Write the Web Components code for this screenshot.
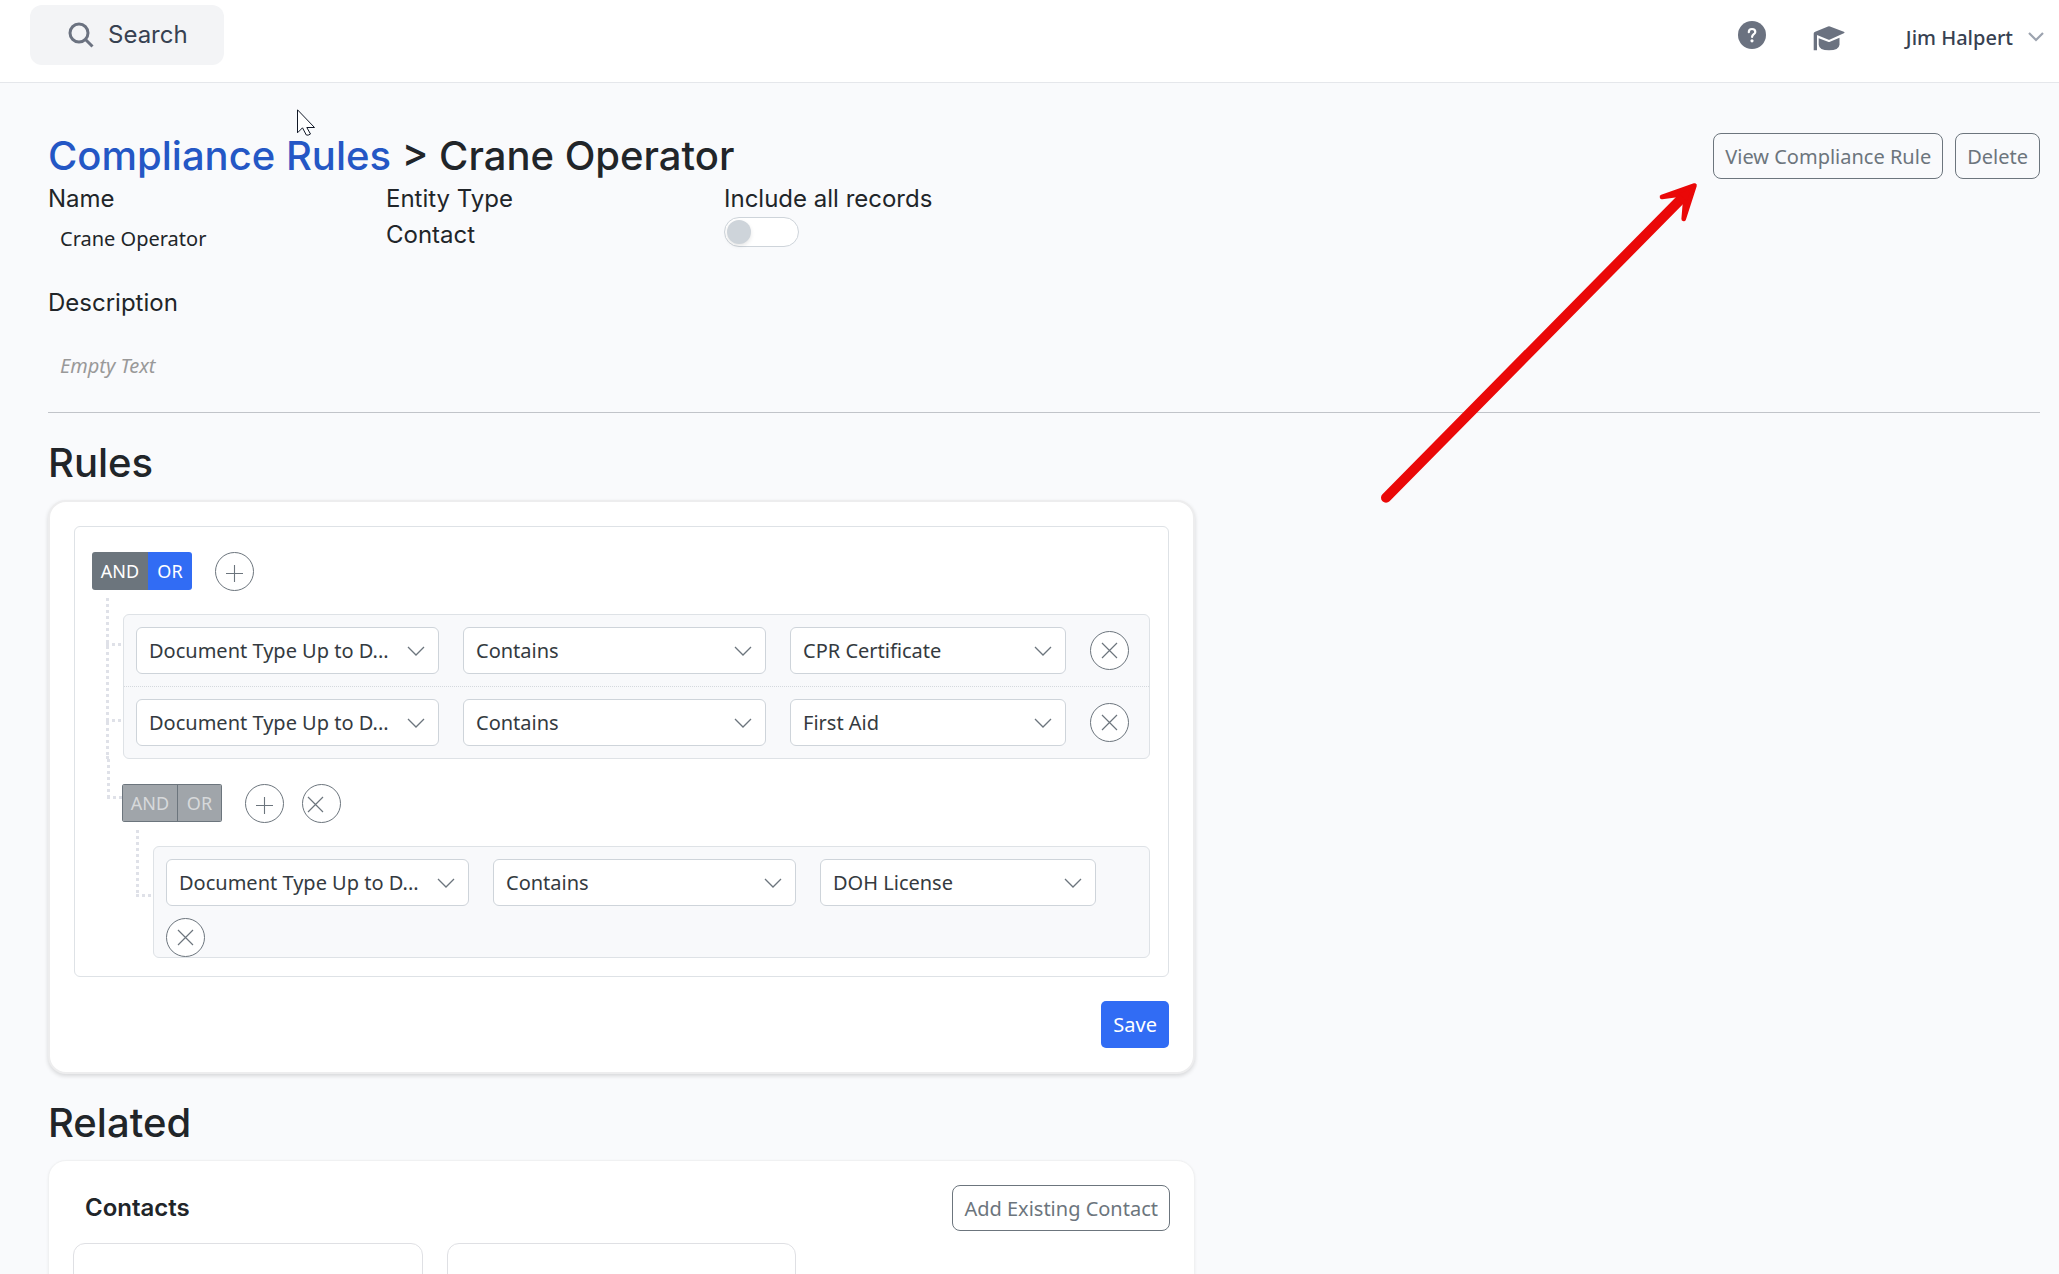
<!DOCTYPE html>
<html lang="en">
<head>
  <meta charset="utf-8">
  <title>Crane Operator - Compliance Rules</title>
  <meta name="viewport" content="width=device-width, initial-scale=1">
  <style>
    :root {
      --ui: "Noto Sans", "Open Sans", sans-serif;
      --heading: Inter, "Liberation Sans", sans-serif;
      --ink: #212529;
      --grey: #6c757d;
      --blue: #316cf4;
      --line: #dee2e6;
    }
    body {
      margin: 0;
      height: 100vh;
      display: flex;
      flex-direction: column;
      overflow: hidden;
      background: #f9fafc;
      color: var(--ink);
      font: 20px/30px var(--ui);
    }
  </style>
</head>
<body>
  <app-header user="Jim Halpert"></app-header>

  <page-body>
    <page-title parent="Compliance Rules" current="Crane Operator">
      <outline-button>View Compliance Rule</outline-button>
      <outline-button>Delete</outline-button>
    </page-title>

    <field-grid>
      <text-field label="Name" inset>Crane Operator</text-field>
      <text-field label="Entity Type">Contact</text-field>
      <toggle-field label="Include all records"></toggle-field>
    </field-grid>
    <text-field label="Description" inset empty>Empty Text</text-field>

    <page-section heading="Rules" ruled>
      <content-card raised>
        <rule-builder>
          <rule-group active="OR">
            <rule-list>
              <rule-row field="Document Type Up to D..." operator="Contains" value="CPR Certificate"></rule-row>
              <rule-row field="Document Type Up to D..." operator="Contains" value="First Aid"></rule-row>
            </rule-list>
            <rule-group slot="nested" locked>
              <rule-list>
                <rule-row tight field="Document Type Up to D..." operator="Contains" value="DOH License"></rule-row>
              </rule-list>
            </rule-group>
          </rule-group>
        </rule-builder>
        <save-bar></save-bar>
      </content-card>
    </page-section>

    <page-section heading="Related">
      <content-card>
        <related-list heading="Contacts">
          <outline-button slot="action">Add Existing Contact</outline-button>
        </related-list>
      </content-card>
    </page-section>

    <pointer-arrow></pointer-arrow>
    <mouse-pointer></mouse-pointer>
  </page-body>

  <script>
    const CROSS = '<svg width="17" height="17" viewBox="0 0 17 17"><path d="M1 1l15 15M16 1L1 16" fill="none" stroke="#6c757d" stroke-width="1.2"/></svg>';
    const PLUS = '<svg width="17" height="17" viewBox="0 0 17 17"><path d="M8.5 0v17M0 8.5h17" fill="none" stroke="#6c757d" stroke-width="1.1"/></svg>';

    class AppHeader extends HTMLElement {
      connectedCallback() {
        this.attachShadow({ mode: 'open' });
        this.shadowRoot.innerHTML = `
          <style>
            :host {
              display: flex;
              flex: none;
              align-items: flex-start;
              justify-content: space-between;
              box-sizing: border-box;
              height: 83px;
              padding: 5px 14px 0 30px;
              background: #fff;
              border-bottom: 1px solid #e5e7eb;
            }
            button, a {
              display: flex;
              align-items: center;
              border: 0;
              background: none;
              padding: 0;
              color: #374151;
            }
            .search {
              gap: 14px;
              height: 60px;
              padding: 0 36px 0 38px;
              border-radius: 12px;
              background: #f3f4f6;
              font: 24px/36px var(--heading);
            }
            .tools {
              display: flex;
              align-items: center;
              height: 60px;
            }
            .help { margin-right: 47px; }
            .learn { margin-right: 61px; padding-top: 6px; }
            .user {
              gap: 14px;
              font: 500 20px/30px var(--ui);
              padding-top: 6px;
            }
            .user svg { margin-bottom: 4px; }
          </style>
          <button class="search">
            <svg width="26" height="26" viewBox="0 0 26 26" fill="none" stroke="#6b7280" stroke-width="3"><circle cx="11" cy="11" r="9"/><path d="M17.5 17.5l7 7"/></svg>
            Search
          </button>
          <div class="tools">
            <a class="help" href="#help" aria-label="Help">
              <svg width="28" height="28" viewBox="0 0 28 28"><circle cx="14" cy="14" r="14" fill="#6b7280"/><path d="M10.8 11.2c0-2 1.3-3.2 3.2-3.2s3.3 1.2 3.3 2.9c0 2.300-3.2 2.4-3.2 5" fill="none" stroke="#fff" stroke-width="2.2" stroke-linecap="round"/><circle cx="14" cy="19.8" r="1.6" fill="#fff"/></svg>
            </a>
            <a class="learn" href="#learn" aria-label="Training">
              <svg width="32" height="25" viewBox="0 0 32 25" fill="#6b7280"><path d="M15 .4q1-.5 2 0l13.8 5.4q1.4.7 0 1.5L17 13.6q-1 .4-2 0L4 9v15.200H.7V7.500q0-1 .9-1.600z"/><path d="M5.700 12.200L15 15.800q1 .4 2 0l9.500-4v6.900q-.6 5.500-10.500 5.500T5.700 18.700z"/></svg>
            </a>
            <button class="user">
              ${this.getAttribute('user')}
              <svg width="18" height="11" viewBox="0 0 18 11"><path d="M2 2l7 7 7-7" fill="none" stroke="#9ca3af" stroke-width="2.2"/></svg>
            </button>
          </div>
        `;
      }
    }
    customElements.define('app-header', AppHeader);

    class PageBody extends HTMLElement {
      connectedCallback() {
        this.attachShadow({ mode: 'open' });
        this.shadowRoot.innerHTML = `
          <style>
            :host {
              display: block;
              flex: 1;
              position: relative;
              padding: 48px 19px 0 48px;
              overflow-y: auto;
              scrollbar-width: none;
            }
          </style>
          <slot></slot>
        `;
      }
    }
    customElements.define('page-body', PageBody);

    class PageTitle extends HTMLElement {
      connectedCallback() {
        this.attachShadow({ mode: 'open' });
        this.shadowRoot.innerHTML = `
          <style>
            :host { display: flex; align-items: center; justify-content: space-between; }
            h1 { margin: 0; font: 500 40px/50px var(--heading); }
            a { color: #2457c5; text-decoration: none; }
            div { display: flex; gap: 12px; }
          </style>
          <h1><a href="#rules">${this.getAttribute('parent')}</a> &gt; ${this.getAttribute('current')}</h1>
          <div><slot></slot></div>
        `;
      }
    }
    customElements.define('page-title', PageTitle);

    class OutlineButton extends HTMLElement {
      connectedCallback() {
        this.attachShadow({ mode: 'open' });
        this.shadowRoot.innerHTML = `
          <style>
            :host { display: block; }
            button {
              display: block;
              padding: 8px 11px 6px;
              border: 1px solid var(--grey);
              border-radius: 8px;
              background: none;
              color: var(--grey);
              font: 20px/30px var(--ui);
            }
          </style>
          <button><slot></slot></button>
        `;
      }
    }
    customElements.define('outline-button', OutlineButton);

    class FieldGrid extends HTMLElement {
      connectedCallback() {
        this.attachShadow({ mode: 'open' });
        this.shadowRoot.innerHTML = `
          <style>
            :host {
              display: grid;
              grid-template-columns: repeat(6, 1fr);
              column-gap: 36px;
              margin-bottom: 26px;
            }
          </style>
          <slot></slot>
        `;
      }
    }
    customElements.define('field-grid', FieldGrid);

    class TextField extends HTMLElement {
      connectedCallback() {
        this.attachShadow({ mode: 'open' });
        this.shadowRoot.innerHTML = `
          <style>
            :host { display: block; font: 24px/36px var(--heading); }
            :host([inset]) .value { padding: 7px 12px 5px; font: 20px/30px var(--ui); }
            :host([empty]) .value { padding-top: 30px; color: #999; font-style: italic; }
          </style>
          <div>${this.getAttribute('label')}</div>
          <div class="value"><slot></slot></div>
        `;
      }
    }
    customElements.define('text-field', TextField);

    class ToggleField extends HTMLElement {
      connectedCallback() {
        this.attachShadow({ mode: 'open' });
        this.shadowRoot.innerHTML = `
          <style>
            :host { display: block; font: 24px/36px var(--heading); white-space: nowrap; }
            label { display: block; }
            input {
              appearance: none;
              display: flex;
              align-items: center;
              box-sizing: border-box;
              width: 75px;
              height: 30px;
              margin: 0;
              padding: 0 2px;
              border: 1px solid #ced4da;
              border-radius: 15px;
              background: #fff;
            }
            input::before {
              content: "";
              width: 24px;
              height: 24px;
              border-radius: 50%;
              background: #ced4da;
              box-shadow: 0 2px 4px rgba(0, 0, 0, .1);
            }
            input:checked { justify-content: flex-end; }
          </style>
          <label for="toggle">${this.getAttribute('label')}</label>
          <input id="toggle" type="checkbox">
        `;
      }
    }
    customElements.define('toggle-field', ToggleField);

    class PageSection extends HTMLElement {
      connectedCallback() {
        this.attachShadow({ mode: 'open' });
        this.shadowRoot.innerHTML = `
          <style>
            :host { display: block; padding-top: 24px; }
            :host([ruled]) { margin-top: 26px; padding-top: 25px; border-top: 1px solid #c1c4c9; }
            h2 { margin: 0 0 12px; font: 500 40px/50px var(--heading); }
            .columns { display: grid; grid-template-columns: repeat(12, 1fr); column-gap: 36px; }
            ::slotted(*) { grid-column: span 7; }
          </style>
          <h2>${this.getAttribute('heading')}</h2>
          <div class="columns"><slot></slot></div>
        `;
      }
    }
    customElements.define('page-section', PageSection);

    class ContentCard extends HTMLElement {
      connectedCallback() {
        this.attachShadow({ mode: 'open' });
        this.shadowRoot.innerHTML = `
          <style>
            :host {
              display: block;
              padding: 24px;
              border: 1px solid #f0f1f2;
              border-radius: 18px;
              background: #fff;
              box-shadow: 0 1px 3px rgba(0, 0, 0, .06);
            }
            :host([raised]) {
              border: 2px solid #ededee;
              box-shadow: 0 2px 4px rgba(0, 0, 0, .14);
            }
          </style>
          <slot></slot>
        `;
      }
    }
    customElements.define('content-card', ContentCard);

    class RuleBuilder extends HTMLElement {
      connectedCallback() {
        this.attachShadow({ mode: 'open' });
        this.shadowRoot.innerHTML = `
          <style>
            :host {
              display: block;
              padding: 25px 18px 18px 17px;
              border: 1px solid var(--line);
              border-radius: 6px;
            }
          </style>
          <slot></slot>
        `;
      }
    }
    customElements.define('rule-builder', RuleBuilder);

    class CircleButton extends HTMLElement {
      connectedCallback() {
        this.attachShadow({ mode: 'open' });
        const add = this.getAttribute('kind') === 'add';
        this.shadowRoot.innerHTML = `
          <style>
            :host { display: block; }
            button {
              display: flex;
              align-items: center;
              justify-content: center;
              width: 39px;
              height: 39px;
              padding: 0;
              border: 1px solid var(--grey);
              border-radius: 50%;
              background: #fff;
            }
            :host([kind="add"]) button { padding-top: 3px; }
            :host([start]) button { justify-content: flex-start; padding: 2px 0 0 4px; }
          </style>
          <button aria-label="${add ? 'Add' : 'Remove'}">${add ? PLUS : CROSS}</button>
        `;
      }
    }
    customElements.define('circle-button', CircleButton);

    class RuleGroup extends HTMLElement {
      connectedCallback() {
        this.attachShadow({ mode: 'open' });
        const locked = this.hasAttribute('locked');
        const nested = this.querySelector('[slot="nested"]');
        const off = locked ? 'disabled' : '';
        this.shadowRoot.innerHTML = `
          <style>
            :host { display: block; }
            .head { display: flex; align-items: flex-start; gap: 18px; }
            .switch {
              display: flex;
              height: 38px;
              margin-right: 5px;
              border-radius: 3px;
              overflow: hidden;
            }
            .switch button {
              width: 56px;
              padding: 0;
              border: 0;
              background: var(--grey);
              color: #fff;
              font: 18px/36px var(--ui);
            }
            .switch button + button { width: 44px; }
            .switch .on { background: var(--blue); }
            .switch button:disabled {
              border: 1px solid var(--grey);
              background: #a0a5aa;
              color: #d7d9db;
            }
            .switch button:disabled + button { border-left: 0; }
            .body { display: flex; padding-top: 7px; }
            .rail { flex: none; width: 17px; padding-left: 14px; }
            .rail i, .branch i {
              --dots: #dfe1e8 0 3px, transparent 3px 6px;
              display: block;
              width: 15px;
              height: 48px;
              background:
                repeating-linear-gradient(to bottom, var(--dots)) 0 0 / 3px 100% no-repeat,
                repeating-linear-gradient(to right, var(--dots)) 0 100% / 100% 3px no-repeat;
            }
            .rail .long { height: 76px; }
            .rail .tail { width: 3px; height: 37px; }
            .rail .only { height: 67px; }
            .branch { display: flex; }
            .branch i { flex: none; height: 40px; margin-left: 15px; }
            .list { flex: 1; min-width: 0; padding-top: 16px; }
            .child { flex: 1; min-width: 0; padding-top: 25px; }
          </style>
          <div class="head">
            <div class="switch">
              <button ${off}>AND</button><button ${off} class="${this.getAttribute('active') === 'OR' ? 'on' : ''}">OR</button>
            </div>
            <circle-button kind="add"></circle-button>
            ${locked ? '<circle-button kind="remove" start></circle-button>' : ''}
          </div>
          <div class="body">
            <div class="rail">${nested ? '<i></i><i class="long"></i><i class="tail"></i>' : '<i class="only"></i>'}</div>
            <div class="list"><slot></slot></div>
          </div>
          ${nested ? '<div class="branch"><i></i><div class="child"><slot name="nested"></slot></div></div>' : ''}
        `;
      }
    }
    customElements.define('rule-group', RuleGroup);

    class RuleList extends HTMLElement {
      connectedCallback() {
        this.attachShadow({ mode: 'open' });
        this.shadowRoot.innerHTML = `
          <style>
            :host {
              display: block;
              border: 1px solid var(--line);
              border-radius: 6px;
              background: #f8f9fb;
            }
            ::slotted(rule-row:not(:first-child)) { border-top: 1px dotted #d5d9de; }
          </style>
          <slot></slot>
        `;
      }
    }
    customElements.define('rule-list', RuleList);

    class RuleRow extends HTMLElement {
      connectedCallback() {
        this.attachShadow({ mode: 'open' });
        this.shadowRoot.innerHTML = `
          <style>
            :host {
              display: flex;
              flex-wrap: wrap;
              align-items: center;
              gap: 12px 24px;
              padding: 12px;
            }
            :host([tight]) { padding-bottom: 0; }
          </style>
          <select-box label="Field" text="${this.getAttribute('field')}"></select-box>
          <select-box label="Operator" text="${this.getAttribute('operator')}"></select-box>
          <select-box label="Value" narrow text="${this.getAttribute('value')}"></select-box>
          <circle-button kind="remove"></circle-button>
        `;
      }
    }
    customElements.define('rule-row', RuleRow);

    class SelectBox extends HTMLElement {
      connectedCallback() {
        this.attachShadow({ mode: 'open' });
        this.shadowRoot.innerHTML = `
          <style>
            :host { display: grid; align-items: center; width: 303px; }
            :host([narrow]) { width: 276px; }
            select, svg { grid-area: 1 / 1; }
            select {
              appearance: none;
              box-sizing: border-box;
              width: 100%;
              height: 47px;
              padding: 1px 40px 0 12px;
              border: 1px solid #ced4da;
              border-radius: 6px;
              background: #fff;
              color: #343a40;
              font: 20px/30px var(--ui);
            }
            svg { justify-self: end; margin-right: 14px; pointer-events: none; }
          </style>
          <select aria-label="${this.getAttribute('label')}"><option>${this.getAttribute('text')}</option></select>
          <svg width="18" height="10" viewBox="0 0 18 10"><path d="M1 1l8 8 8-8" fill="none" stroke="#6c757d" stroke-width="1.3"/></svg>
        `;
      }
    }
    customElements.define('select-box', SelectBox);

    class SaveBar extends HTMLElement {
      connectedCallback() {
        this.attachShadow({ mode: 'open' });
        this.shadowRoot.innerHTML = `
          <style>
            :host { display: flex; justify-content: flex-end; padding-top: 24px; }
            button {
              height: 47px;
              padding: 1px 12px 0;
              border: 0;
              border-radius: 5px;
              background: var(--blue);
              color: #fff;
              font: 20px/30px var(--ui);
            }
          </style>
          <button>Save</button>
        `;
      }
    }
    customElements.define('save-bar', SaveBar);

    class RelatedList extends HTMLElement {
      connectedCallback() {
        this.attachShadow({ mode: 'open' });
        this.shadowRoot.innerHTML = `
          <style>
            :host { display: block; }
            .head { display: flex; align-items: center; justify-content: space-between; padding-left: 12px; }
            h3 { margin: 0; font: 600 24px/36px var(--heading); }
            .tiles { display: grid; grid-template-columns: repeat(3, 1fr); gap: 24px; margin-top: 12px; }
            .tile { height: 140px; border: 1px solid #dfe0e4; border-radius: 12px; }
          </style>
          <div class="head">
            <h3>${this.getAttribute('heading')}</h3>
            <slot name="action"></slot>
          </div>
          <div class="tiles"><div class="tile"></div><div class="tile"></div></div>
        `;
      }
    }
    customElements.define('related-list', RelatedList);

    // Red callout that points at the "View" button, so it hangs off the right edge
    class PointerArrow extends HTMLElement {
      connectedCallback() {
        this.attachShadow({ mode: 'open' });
        this.shadowRoot.innerHTML = `
          <style>
            :host { position: absolute; top: 97px; right: 359px; pointer-events: none; }
            svg { display: block; }
          </style>
          <svg width="320" height="326" viewBox="0 0 320 326" stroke="#ea0808" stroke-linecap="round" stroke-linejoin="round">
            <path d="M6 317.700L306 14" fill="none" stroke-width="10"/>
            <path d="M314.500 5.500L282 17l15-2 8 8-1.300 16z" fill="#ea0808" stroke-width="4.600"/>
          </svg>
        `;
      }
    }
    customElements.define('pointer-arrow', PointerArrow);

    class MousePointer extends HTMLElement {
      connectedCallback() {
        this.attachShadow({ mode: 'open' });
        this.shadowRoot.innerHTML = `
          <style>
            :host { position: absolute; top: 26px; left: 297px; pointer-events: none; }
            svg { display: block; }
          </style>
          <svg width="20" height="28" viewBox="0 0 20 28"><path d="M.5.8v23l5-5 3.800 7.200q1.600.8 4.200-1l-3.700-6.500h7.700z" fill="#fff" stroke="#111827"/></svg>
        `;
      }
    }
    customElements.define('mouse-pointer', MousePointer);
  </script>
</body>
</html>
